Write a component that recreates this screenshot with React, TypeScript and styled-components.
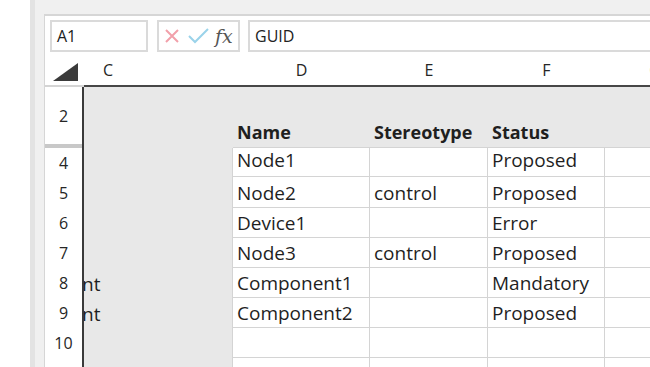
import React from "react";
import styled, { createGlobalStyle } from "styled-components";

const GlobalStyle = createGlobalStyle`
  html, body {
    margin: 0;
    padding: 0;
    background: #fff;
    overflow: hidden;
  }
  body {
    font-family: "Open Sans", "Liberation Sans", sans-serif;
    color: #1f1f1f;
  }
`;

const columnTemplate = "39px 149px 137px 118px 117px 100px";

type DataRow = {
  num: string;
  height: number;
  lift?: number;
  c?: string;
  name?: string;
  stereo?: string;
  status?: string;
};

const dataRows: DataRow[] = [
  { num: "4", height: 29, lift: 4, name: "Node1", status: "Proposed" },
  { num: "5", height: 31, name: "Node2", stereo: "control", status: "Proposed" },
  { num: "6", height: 30, name: "Device1", status: "Error" },
  { num: "7", height: 30, name: "Node3", stereo: "control", status: "Proposed" },
  { num: "8", height: 30, c: "nt", name: "Component1", status: "Mandatory" },
  { num: "9", height: 30, c: "nt", name: "Component2", status: "Proposed" },
  { num: "10", height: 30 },
  { num: "11", height: 30 },
];

export default function App() {
  return (
    <>
      <GlobalStyle />
      <Window>
        <Margin />
        <Shell>
          <Sheet>
            <FormulaBar>
              <NameBox>A1</NameBox>
              <FxBox>
                <svg width="16" height="16" viewBox="0 0 16 16">
                  <path d="M2 2 L14 14 M14 2 L2 14" stroke="#f2a0aa" strokeWidth="2" fill="none" />
                </svg>
                <svg width="21" height="16" viewBox="0 0 21 16">
                  <path d="M1 8 L7 14 L20 1" stroke="#9ad3ea" strokeWidth="2" fill="none" />
                </svg>
                <FxLabel>fx</FxLabel>
              </FxBox>
              <FormulaInput>GUID</FormulaInput>
            </FormulaBar>

            <SheetRow $h={35}>
              <Corner>
                <svg width="25" height="18" viewBox="0 0 25 18">
                  <path d="M25 0 L25 18 L0 18 Z" fill="#3b3b3b" />
                </svg>
              </Corner>
              <ColHead $left>C</ColHead>
              <ColHead>D</ColHead>
              <ColHead>E</ColHead>
              <ColHead>F</ColHead>
              <ColHead>G</ColHead>
            </SheetRow>

            <SheetRow $h={57}>
              <RowHead>2</RowHead>
              <Cell $tone="gray" />
              <Cell $tone="gray" $bold>Name</Cell>
              <Cell $tone="gray" $bold>Stereotype</Cell>
              <Cell $tone="gray" $bold>Status</Cell>
              <Cell $tone="gray" />
            </SheetRow>

            <SheetRow $h={4}>
              <RowHead $hidden />
              <Cell $tone="gray" />
              <Cell $tone="gray" $bottom />
              <Cell $tone="gray" $bottom />
              <Cell $tone="gray" $bottom />
              <Cell $tone="gray" $bottom />
            </SheetRow>

            {dataRows.map(row => (
              <SheetRow $h={row.height} key={row.num}>
                <RowHead>{row.num}</RowHead>
                <Cell $tone="gray" $right $flush $lift={row.lift}>{row.c}</Cell>
                <Cell $tone="white" $right $bottom $lift={row.lift}>{row.name}</Cell>
                <Cell $tone="white" $right $bottom $lift={row.lift}>{row.stereo}</Cell>
                <Cell $tone="white" $right $bottom $lift={row.lift}>{row.status}</Cell>
                <Cell $tone="white" $right $bottom />
              </SheetRow>
            ))}
          </Sheet>
        </Shell>
      </Window>
    </>
  );
}

const Window = styled.div`
  display: flex;
  width: 650px;
  height: 367px;
  overflow: hidden;
`;

const Margin = styled.div`
  width: 30px;
  flex-shrink: 0;
  background: #fff;
`;

const Shell = styled.div`
  flex: 1;
  min-width: 0;
  background: #f0f0f0;
  border-left: 5px solid #e3e3e3;
  padding: 14px 0 0 9px;
  overflow: hidden;
`;

const Sheet = styled.div`
  background: #fff;
  border-top: 2px solid #d6d6d6;
  border-left: 1px solid #d6d6d6;
  height: 100%;
  overflow: hidden;
`;

const FormulaBar = styled.div`
  display: flex;
  align-items: stretch;
  height: 32px;
  padding: 4px 0 0 5px;
  font-size: 16px;
  color: #222;
`;

const NameBox = styled.div`
  width: 98px;
  box-sizing: border-box;
  border: 2px solid #dadada;
  display: flex;
  align-items: center;
  padding-left: 5px;
`;

const FxBox = styled.div`
  width: 83px;
  margin-left: 9px;
  box-sizing: border-box;
  border: 2px solid #dadada;
  display: flex;
  align-items: center;
  gap: 8px;
  padding-left: 5px;
`;

const FxLabel = styled.span`
  font-family: "DejaVu Serif", "Liberation Serif", serif;
  font-style: italic;
  font-size: 19px;
  color: #555;
  margin-left: -2px;
  line-height: 1;
`;

const FormulaInput = styled.div`
  flex: 1;
  margin-left: 8px;
  box-sizing: border-box;
  border: 2px solid #dadada;
  border-right: none;
  display: flex;
  align-items: center;
  padding-left: 5px;
`;

const SheetRow = styled.div<{ $h: number }>`
  display: grid;
  grid-template-columns: ${columnTemplate};
  height: ${p => p.$h}px;
`;

const Corner = styled.div`
  display: flex;
  align-items: flex-end;
  justify-content: flex-end;
  padding: 0 6px 4px 0;
  border-bottom: 2px solid #d4d4d4;
`;

const ColHead = styled.div<{ $left?: boolean }>`
  display: flex;
  align-items: center;
  justify-content: ${p => (p.$left ? "flex-start" : "center")};
  padding: 3px 0 0 ${p => (p.$left ? "19px" : "0")};
  border-bottom: 2px solid #474747;
  font-size: 16px;
  color: #262626;
  background: #fff;
`;

const RowHead = styled.div<{ $hidden?: boolean }>`
  display: flex;
  align-items: center;
  justify-content: center;
  border-right: 2px solid #3a3a3a;
  background: ${p => (p.$hidden ? "#c8c8c8" : "#fff")};
  font-size: 16px;
  color: #262626;
  overflow: hidden;
`;

const Cell = styled.div<{
  $tone: "gray" | "white";
  $right?: boolean;
  $bottom?: boolean;
  $bold?: boolean;
  $flush?: boolean;
  $lift?: number;
}>`
  display: flex;
  align-items: flex-end;
  min-width: 0;
  overflow: hidden;
  white-space: nowrap;
  background: ${p => (p.$tone === "gray" ? "#e8e8e8" : "#fff")};
  border-right: ${p => (p.$right ? "1px solid #d4d4d4" : "none")};
  border-bottom: ${p => (p.$bottom ? "1px solid #d4d4d4" : "none")};
  padding: 0 0 ${p => (p.$bold ? 0 : p.$lift ?? 2)}px ${p => (p.$flush ? "0" : "4px")};
  text-indent: ${p => (p.$flush ? "-2px" : "0")};
  font-size: ${p => (p.$bold ? "18px" : "19px")};
  font-weight: ${p => (p.$bold ? 700 : 400)};
  line-height: 24px;
  color: #1f1f1f;
`;
